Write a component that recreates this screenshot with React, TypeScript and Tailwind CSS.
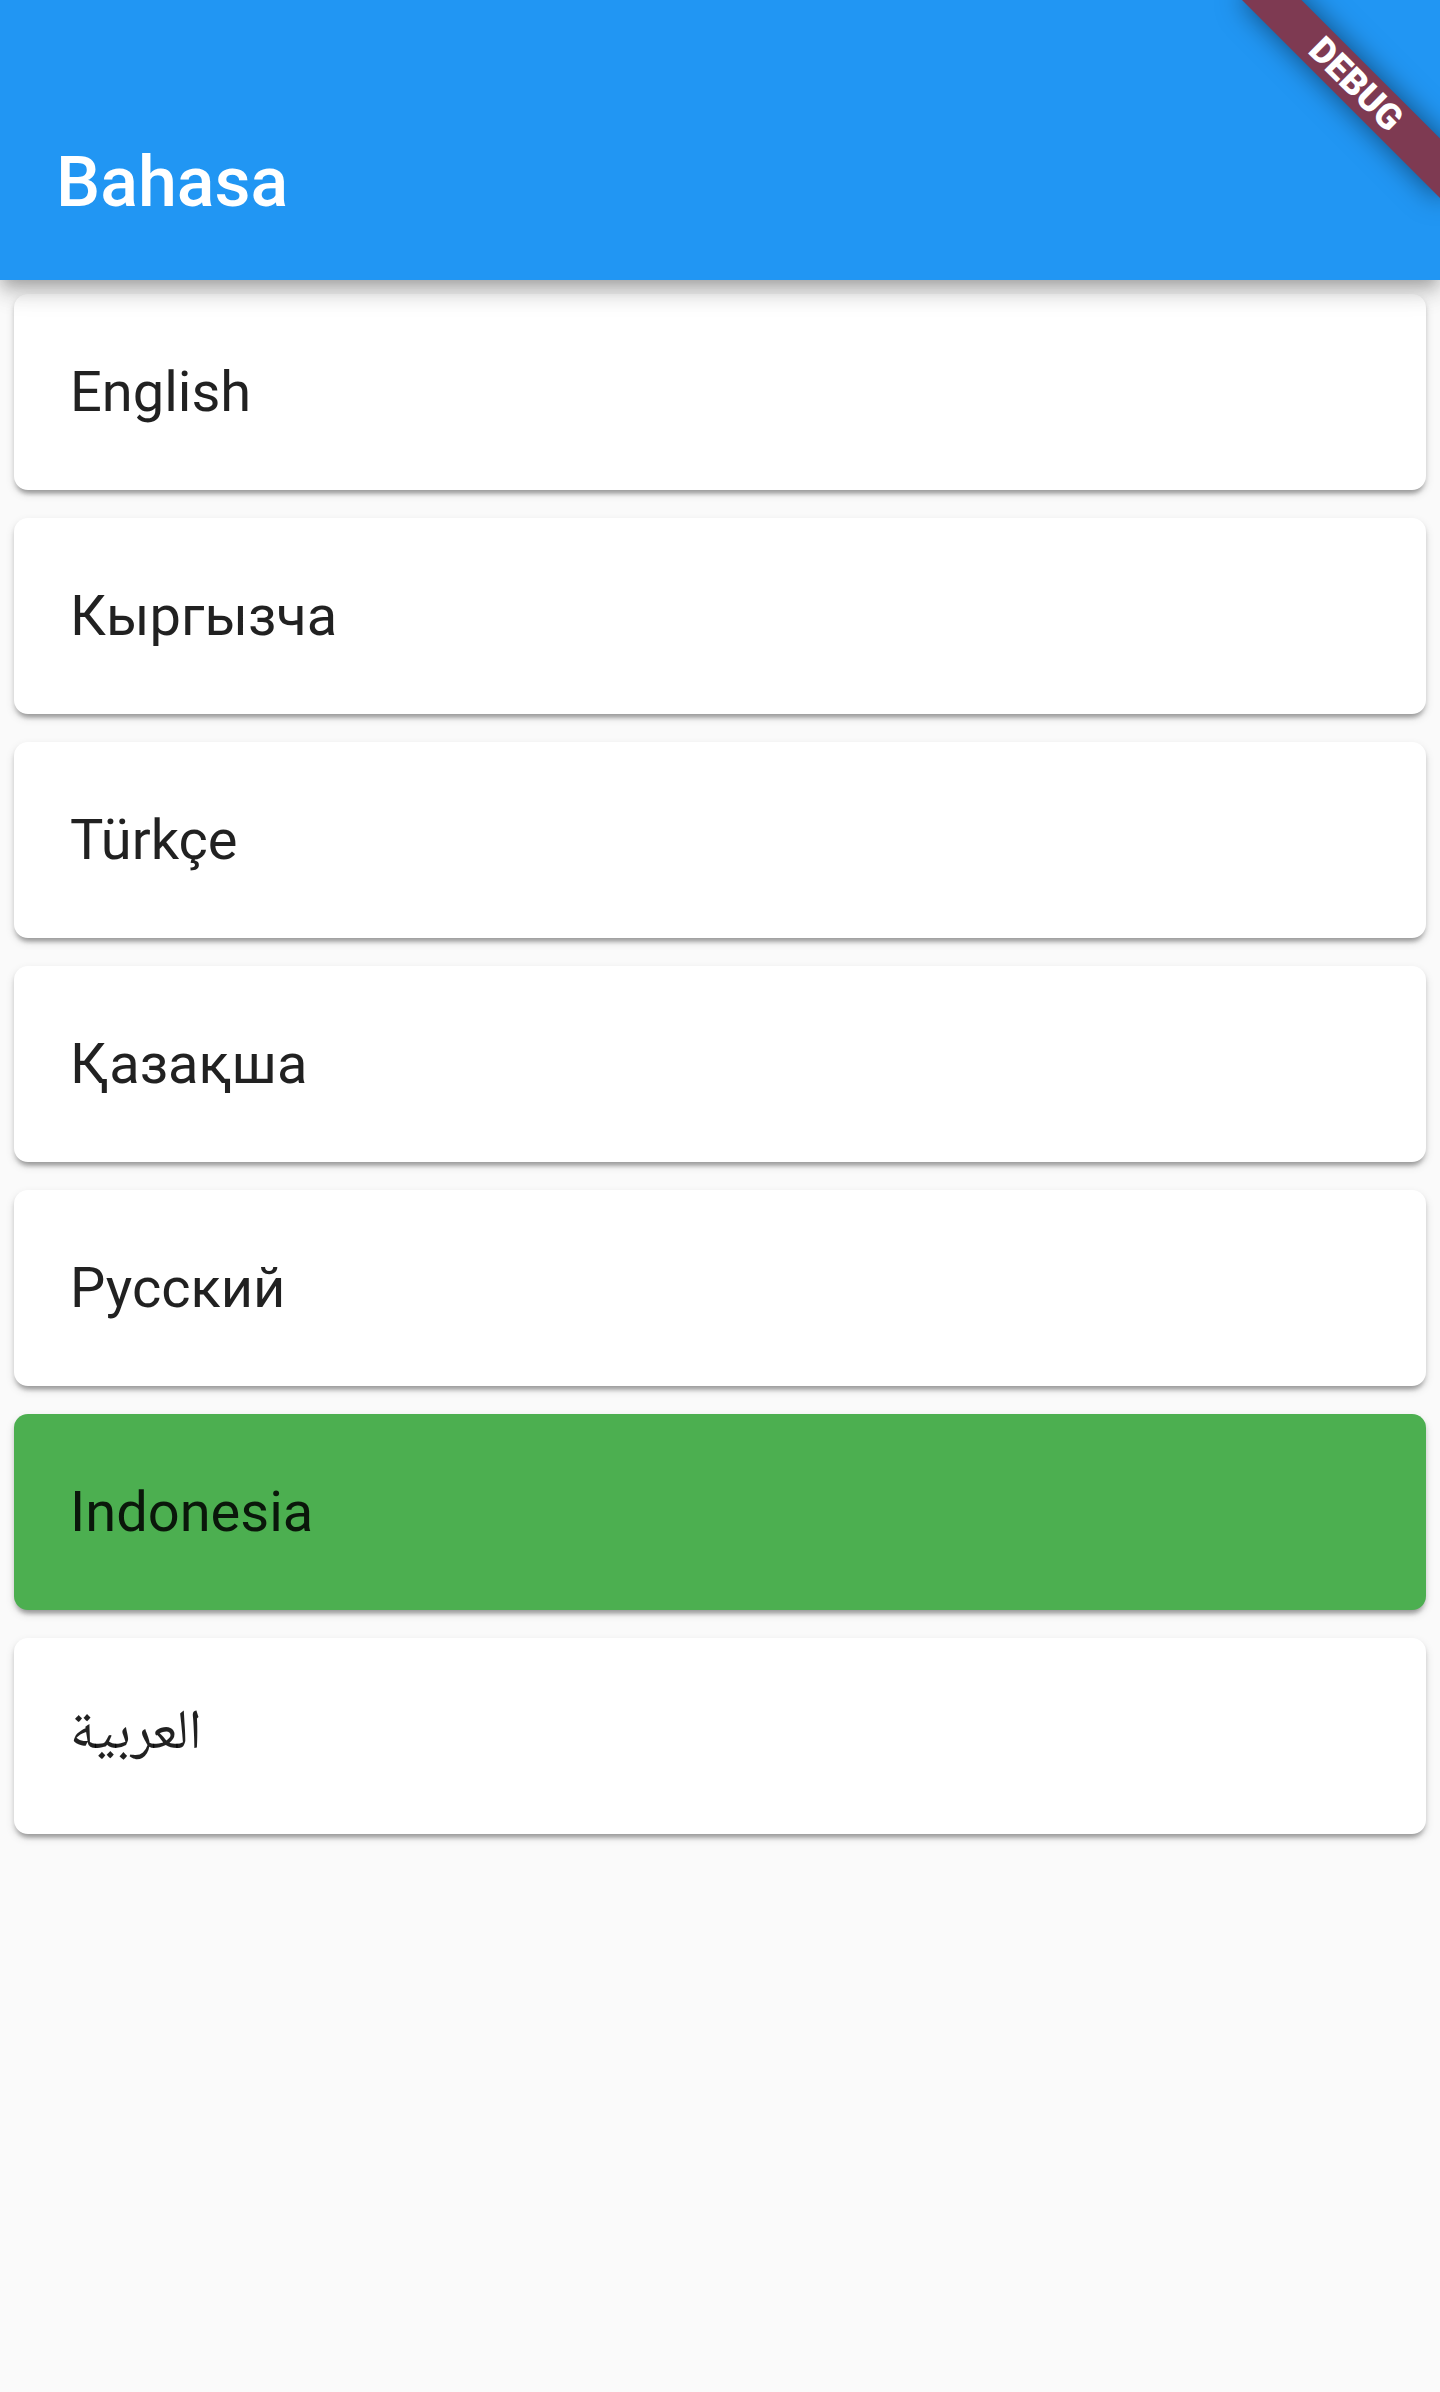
import React from "react";

const languages = [
  { label: "English", selected: false, arabic: false },
  { label: "Кыргызча", selected: false, arabic: false },
  { label: "Türkçe", selected: false, arabic: false },
  { label: "Қазақша", selected: false, arabic: false },
  { label: "Русский", selected: false, arabic: false },
  { label: "Indonesia", selected: true, arabic: false },
  { label: "العربية", selected: false, arabic: true },
];

export default function App() {
  return (
    <div
      className="relative min-h-[2392px] w-[1440px] overflow-hidden bg-[#fafafa]"
      style={{ fontFamily: 'Roboto, "DejaVu Sans", "Noto Sans", sans-serif' }}
    >
      <header className="relative z-10 flex h-[280px] items-end bg-[#2196f3] shadow-[0_7px_14px_-4px_rgba(0,0,0,0.2),0_14px_18px_0_rgba(0,0,0,0.14),0_4px_35px_0_rgba(0,0,0,0.12)]">
        <div className="flex h-[196px] items-center pl-[56px]">
          <h1 className="text-[70px] font-medium leading-none text-white">Bahasa</h1>
        </div>
      </header>

      <main className="flex flex-col gap-[28px] p-[14px]">
        {languages.map((l) => (
          <div
            key={l.label}
            className={
              "flex h-[196px] items-center rounded-[14px] px-[56px] shadow-[0_7px_4px_-4px_rgba(0,0,0,0.2),0_4px_4px_0_rgba(0,0,0,0.14),0_4px_10px_0_rgba(0,0,0,0.12)] " +
              (l.selected ? "bg-[#4caf50]" : "bg-white")
            }
          >
            {l.arabic ? (
              <span className="font-['Noto_Naskh_Arabic','Noto_Sans_Arabic','DejaVu_Sans',sans-serif] text-[56px] leading-none text-black/[0.87]">
                {l.label}
              </span>
            ) : (
              <span className="text-[56px] leading-none text-black/[0.87]">{l.label}</span>
            )}
          </div>
        ))}
      </main>

      <div className="absolute left-[1300px] top-[98px] z-20 flex h-[42px] w-[280px] origin-[140px_-98px] rotate-45 items-center justify-center bg-[#7e3a52] shadow-[0_0_28px_rgba(0,0,0,0.5)]">
        <span className="text-[36px] font-black leading-none text-white">DEBUG</span>
      </div>
    </div>
  );
}
